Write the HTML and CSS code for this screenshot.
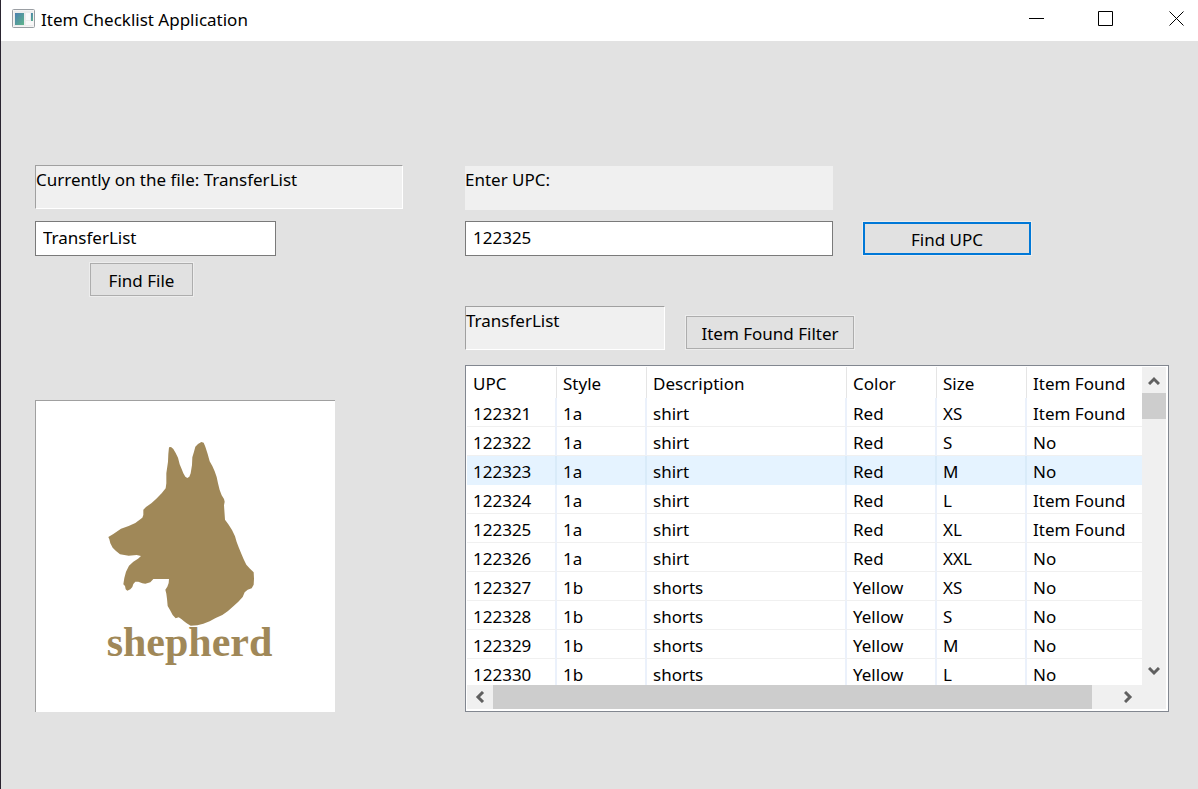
FILE: index.html
```html
<!DOCTYPE html>
<html lang="en">
<head>
<meta charset="utf-8">
<title>Item Checklist Application</title>
<link rel="stylesheet" href="styles.css">
</head>
<body>
<div class="window">
  <header class="titlebar">
    <svg class="app-icon" width="23" height="19" viewBox="0 0 23 19" aria-hidden="true">
      <defs>
        <linearGradient id="pane" x1="0" y1="0" x2="1" y2="1"><stop offset="0" stop-color="#4a7fb0"/><stop offset="1" stop-color="#5fb58a"/></linearGradient>
      </defs>
      <rect x="0.5" y="0.5" width="22" height="18" rx="1" fill="#f4f4f4" stroke="#9a9ea3"/>
      <rect x="2" y="2" width="19" height="15" fill="#ececec"/>
      <rect x="3" y="4" width="9" height="12" fill="url(#pane)"/>
      <rect x="14" y="4" width="4" height="7" fill="#fafafa"/>
      <rect x="14" y="12" width="7" height="4" fill="#f8f8f8"/>
      <rect x="19" y="4" width="2" height="8" fill="url(#pane)"/>
    </svg>
    <h1 class="title">Item Checklist Application</h1>
    <div class="window-controls">
      <button class="window-button" aria-label="Minimize"><svg width="16" height="16" viewBox="0 0 16 16"><path d="M1 7.500H16" stroke="#000"/></svg></button>
      <button class="window-button" aria-label="Maximize"><svg width="16" height="16" viewBox="0 0 16 16"><path d="M.5 .500H14.500V14.500H.5Z" fill="none" stroke="#000"/></svg></button>
      <button class="window-button" aria-label="Close"><svg width="16" height="16" viewBox="0 0 16 16"><path d="M.5 .500L14.500 14.500M14.500 .500L.5 14.500" stroke="#000"/></svg></button>
    </div>
  </header>
  <main class="content">
    <section class="files">
      <label class="caption sunken" for="file">Currently on the file: TransferList</label>
      <input class="field file-field" id="file" type="text" value="TransferList">
      <button class="button file-button">Find File</button>
      <div class="logo">
        <svg class="logo-mark" viewBox="0 0 600 750" role="img" aria-label="shepherd">
          <path fill="#a08858" d="M237 52L243 51L250 57L257 69L264 83L269 103L274 115L280 130L286 140L292 144L298 140L302 130L306 105L307 82L312 65L316 50L324 42L334 36L341 38L346 50L353 72L359 94L367 108L374 124L380 141L384 160L389 180L395 196L402 207L404 215L402 226L405 269L415 283L426 300L435 319L440 336L446 352L454 371L461 388L469 404L480 416L491 427L492 446L491 464L485 475L473 479L464 487L458 501L445 515L430 529L414 543L397 555L377 564L359 574L340 581L322 586L302 587L290 580L282 574L274 567L266 562L257 565L248 555L240 540L233 528L231 506L229 491L226 479L232 470L236 459L237 447L190 447L181 457L166 461L157 460L145 455L136 455L130 462L127 471L121 478L112 482L107 478L105 468L100 463L103 444L108 425L117 407L130 395L144 386L153 378L140 375L116 377L90 373L78 363L68 353L61 340L58 328L55 321L70 312L93 296L116 288L136 279L157 263L160 255L160 239L168 231L184 220L199 206L215 190L227 175L229 160L229 130L234 95L235 72Z"/>
          <text class="logo-text" x="50" y="678">shepherd</text>
        </svg>
      </div>
    </section>
    <section class="items">
      <div class="search">
        <label class="caption plain" for="upc">Enter UPC:</label>
        <div class="search-row">
          <input class="field upc-field" id="upc" type="text" value="122325">
          <button class="button wide-button default">Find UPC</button>
        </div>
      </div>
      <div class="filter-row">
        <div class="caption sunken list-name">TransferList</div>
        <button class="button wide-button">Item Found Filter</button>
      </div>
      <div class="list">
        <div class="list-view">
          <table class="table">
            <colgroup><col class="c-short"><col class="c-short"><col class="c-long"><col class="c-short"><col class="c-short"><col></colgroup>
            <thead><tr><th>UPC</th><th>Style</th><th>Description</th><th>Color</th><th>Size</th><th>Item Found</th></tr></thead>
            <tbody>
              <tr><td>122321</td><td>1a</td><td>shirt</td><td>Red</td><td>XS</td><td>Item Found</td></tr>
              <tr><td>122322</td><td>1a</td><td>shirt</td><td>Red</td><td>S</td><td>No</td></tr>
              <tr class="hot"><td>122323</td><td>1a</td><td>shirt</td><td>Red</td><td>M</td><td>No</td></tr>
              <tr><td>122324</td><td>1a</td><td>shirt</td><td>Red</td><td>L</td><td>Item Found</td></tr>
              <tr><td>122325</td><td>1a</td><td>shirt</td><td>Red</td><td>XL</td><td>Item Found</td></tr>
              <tr><td>122326</td><td>1a</td><td>shirt</td><td>Red</td><td>XXL</td><td>No</td></tr>
              <tr><td>122327</td><td>1b</td><td>shorts</td><td>Yellow</td><td>XS</td><td>No</td></tr>
              <tr><td>122328</td><td>1b</td><td>shorts</td><td>Yellow</td><td>S</td><td>No</td></tr>
              <tr><td>122329</td><td>1b</td><td>shorts</td><td>Yellow</td><td>M</td><td>No</td></tr>
              <tr><td>122330</td><td>1b</td><td>shorts</td><td>Yellow</td><td>L</td><td>No</td></tr>
            </tbody>
          </table>
        </div>
        <div class="bar bar-vertical">
          <button class="arrow" aria-label="Scroll up"><svg width="12" height="10" viewBox="0 0 12 10"><path d="M1 9L6 4L11 9"/></svg></button>
          <div class="thumb"></div>
          <div class="track"></div>
          <button class="arrow" aria-label="Scroll down"><svg width="12" height="10" viewBox="0 0 12 10"><path d="M1 1L6 6L11 1"/></svg></button>
        </div>
        <div class="bar bar-horizontal">
          <button class="arrow" aria-label="Scroll left"><svg width="10" height="12" viewBox="0 0 10 12"><path d="M8 1L3 6L8 11"/></svg></button>
          <div class="thumb"></div>
          <div class="track"></div>
          <button class="arrow" aria-label="Scroll right"><svg width="10" height="12" viewBox="0 0 10 12"><path d="M1 1L6 6L1 11"/></svg></button>
        </div>
        <div class="corner"></div>
      </div>
    </section>
  </main>
</div>
</body>
</html>
```
FILE: styles.css
```css
* { box-sizing: border-box; }
body {
  margin: 0;
  font: 17px/24px "Noto Sans", "Open Sans", sans-serif;
  color: #000;
}
button, input { font: inherit; color: inherit; border-radius: 0; }
button { padding: 0; }

.window {
  min-height: 100vh;
  background: #e2e2e2;
  border-left: 1px solid #2a2430;
}
.titlebar {
  display: flex;
  align-items: center;
  gap: 6px;
  height: 41px;
  padding: 0 0 4px 11px;
  background: #fff;
  overflow: hidden;
}
.title { margin: 0; padding-top: 2px; font-size: 17px; font-weight: 400; line-height: 24px; }
.window-controls { display: flex; margin-left: auto; }
.window-button {
  display: flex;
  align-items: center;
  justify-content: center;
  width: 70px;
  height: 37px;
  border: 0;
  background: none;
}
.window-button:last-child { width: 72px; margin-right: -15px; }

.content {
  display: grid;
  grid-template-columns: 368px minmax(0, 1fr);
  column-gap: 62px;
  padding: 124px 29px 77px 34px;
}
.caption { display: block; width: 368px; height: 44px; background: #f0f0f0; }
.sunken { border: 1px solid; border-color: #a0a0a0 #fff #fff #a0a0a0; padding-top: 2px; }
.plain { height: 45px; border-top: 1px solid #e2e2e2; padding-top: 2px; }
.field {
  display: block;
  height: 35px;
  padding: 0 7px 2px;
  border: 1px solid #7a7a7a;
  background: #fff;
}
.button {
  height: 33px;
  padding-top: 2px;
  border: 1px solid #adadad;
  background: #e1e1e1;
  box-shadow: 0 0 0 1px #ededed;
}
.default { border: 2px solid #0078d7; }
.wide-button { width: 168px; }

.files { display: flex; flex-direction: column; align-items: flex-start; }
.file-field { width: 241px; margin-top: 12px; }
.file-button { width: 103px; margin: 7px 0 0 55px; }
.logo {
  width: 300px;
  height: 312px;
  margin-top: 104px;
  padding: 29px 0 0 54px;
  border-left: 1px solid #a0a0a0;
  border-top: 1px solid #a0a0a0;
  background: #fff;
}
.logo-mark { display: block; width: 200px; height: 250px; }
.logo-text {
  font-family: "Liberation Serif", serif;
  font-size: 126px;
  font-weight: 700;
  fill: #a08858;
}

.search-row { display: flex; align-items: center; gap: 30px; margin-top: 11px; }
.upc-field { width: 368px; }
.filter-row { display: flex; align-items: flex-end; gap: 21px; margin-top: 50px; }
.filter-row .button { margin-bottom: 1px; }
.list-name { width: 200px; }

.list {
  display: grid;
  grid-template-columns: minmax(0, 1fr) 24px;
  grid-template-rows: 318px 24px;
  margin-top: 15px;
  padding: 1px 2px 2px 1px;
  border: 1px solid #828790;
  background: #fff;
}
.list-view { overflow: hidden; }
.table { width: 100%; table-layout: fixed; border-collapse: separate; border-spacing: 0; }
.c-short { width: 90px; }
.c-long { width: 200px; }
.table th, .table td {
  padding: 2px 0 0 6px;
  text-align: left;
  font-weight: 400;
  white-space: nowrap;
}
.table th { height: 31px; border-right: 1px solid #e5e5e5; }
.table td {
  height: 29px;
  padding-top: 4px;
  border-right: 2px solid #ebf1fb;
  border-bottom: 1px solid #f0f0f0;
}
.table th:last-child, .table td:last-child { border-right: 0; }
.hot td { background: #e5f3ff; border-color: #d9ebf9; border-bottom-color: #e5f3ff; }

.bar { display: flex; background: #f0f0f0; }
.bar-vertical { flex-direction: column; }
.corner { background: #f0f0f0; }
.thumb { background: #cdcdcd; }
.bar-vertical .thumb { height: 26px; }
.bar-horizontal .thumb { flex: 599; }
.track { flex: 1; }
.bar-horizontal .track { flex: 24; }
.arrow {
  display: flex;
  align-items: center;
  justify-content: center;
  width: 24px;
  height: 26px;
  border: 0;
  background: none;
}
.bar-horizontal .arrow { width: 26px; height: 24px; }
.arrow path { fill: none; stroke: #606060; stroke-width: 3; }
```
